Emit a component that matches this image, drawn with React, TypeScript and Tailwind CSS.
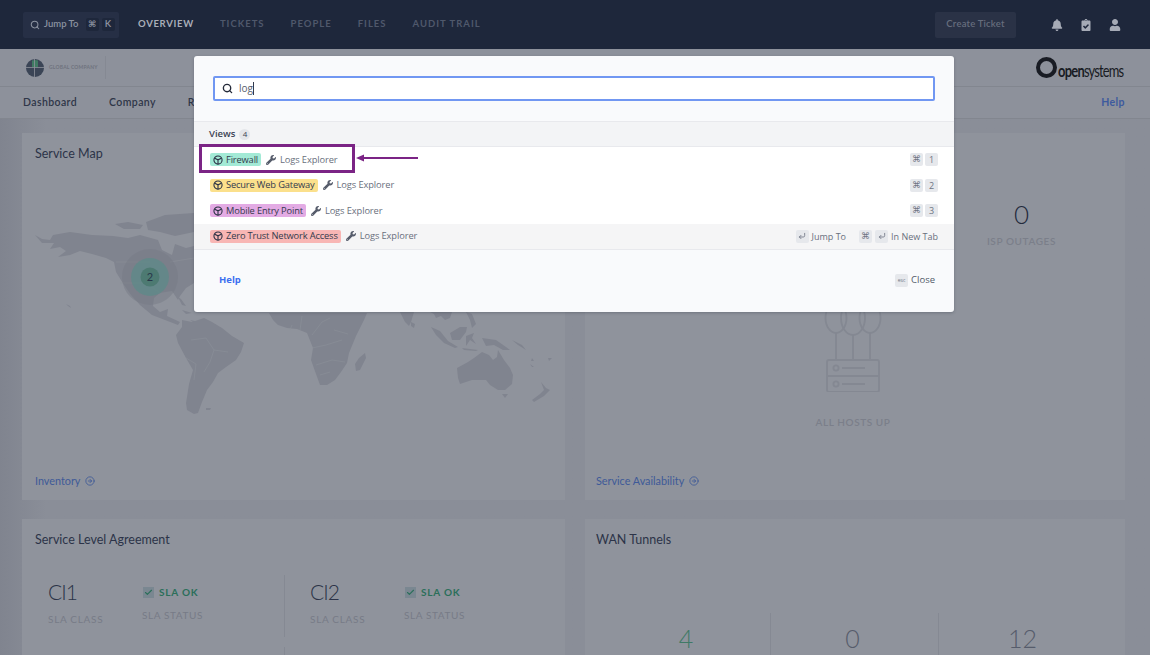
import { Check, CircleArrowRight, CornerDownLeft, Search } from 'lucide-react';
import { FaBell, FaClipboardCheck, FaUser, FaWrench } from 'react-icons/fa';
import type { ReactNode } from 'react';

const views = [
  { name: 'Firewall', tag: 'bg-[#a3ead6]', key: '1' },
  { name: 'Secure Web Gateway', tag: 'bg-[#fbe08c]', key: '2' },
  { name: 'Mobile Entry Point', tag: 'bg-[#e3abe4]', key: '3' },
  { name: 'Zero Trust Network Access', tag: 'bg-[#f8b6b4]', key: '' },
];

function CubeIcon() {
  return (
    <svg viewBox="0 0 12 12" className="size-[10px] shrink-0" fill="none" stroke="#2b3245" strokeWidth="1.3">
      <circle cx="6" cy="6" r="4.9" />
      <path d="M2 3.8 6 5.8l4-2M6 5.8V11" />
    </svg>
  );
}

function Kbd({ children, className = '' }: { children: ReactNode; className?: string }) {
  return (
    <span className={`flex h-[13px] w-[13px] items-center justify-center rounded-[2px] bg-[#e6e8ec] text-[9px] text-[#6f7583] ${className}`}>
      {children}
    </span>
  );
}

function Cmd() {
  return <span className="font-['DejaVu_Sans',sans-serif] text-[9px] leading-none">⌘</span>;
}

function WorldMap() {
  const land = '#80848f';
  return (
    <svg viewBox="22 200 543 230" className="block h-[230px] w-[543px]" fill={land}>
      {/* north america */}
      <path d="M35 235 42 239 50 240 53 235 70 232 92 235 113 236 128 238 140 235 158 240 162 250 172 255 175 244 186 248 194 246 194 283 186 288 180 296 178 300 172 291 160 293 154 298 153 306 160 312 168 309 167 316 180 322 178 325 165 320 152 315 140 305 131 295 124 285 116 272 114 262 106 258 92 254 80 251 70 255 58 257 66 251 60 247 50 249 54 243 42 243Z" />
      <path d="M115 224 128 222 143 225 140 229 124 229ZM146 222 165 215 194 213 194 232 175 236 160 232 148 230ZM178 297 182 305 186 306 181 299ZM66 304 70 306 71 308 68 306ZM190 320 200 322 196 324ZM182 310 192 313 186 314Z" />
      {/* south america */}
      <path d="M182 320 192 322 204 318 212 322 222 328 232 336 244 343 241 352 236 360 226 367 218 373 213 382 207 390 202 402 198 413 194 414 187 410 186 403 187 397 189 384 193 370 186 358 178 343 176 335 182 327Z" />
      <path d="M206 408 211 408 210 410 206 410Z" />
      {/* africa, asia and the islands below the dialog */}
      <path d="M269 313 367 313 364 320 356 336 349 353 347 363 341 372 335 380 327 385 320 385 316 374 311 360 313 348 307 333 297 329 287 328 278 325 273 320Z" />
      <path d="M365 353 366 358 360 370 356 371 355 364 359 358Z" />
      <path d="M400 312 414 312 411 322 409 326 405 322ZM411 322 415 324 414 328 411 326ZM430 312 452 312 450 318 445 320 441 316 436 318 434 314ZM466 312 472 314 476 324 472 328 470 320Z" />
      <path d="M431 327 440 331 448 341 458 347 455 348 444 343 436 335ZM450 333 460 327 467 327 466 332 460 340 452 340ZM466 336 474 333 472 338 476 344 470 340 466 346ZM462 348 478 350 476 351 464 350ZM482 338 496 340 506 347 510 350 503 350 494 345 486 346ZM512 340 522 345 526 350 518 345ZM532 358 534 361 531 361ZM548 358 552 358 549 361ZM530 364 534 367 532 367Z" />
      {/* australia and new zealand */}
      <path d="M457 368 468 362 474 358 482 352 489 355 493 360 497 357 498 350 504 360 510 368 513 375 512 384 505 390 498 390 490 385 486 380 480 380 472 380 460 384 458 378Z" />
      <path d="M502 394 508 394 505 398ZM541 382 546 388 550 390 544 396 534 402 532 400 540 394 544 390Z" />
      <g fill="none" stroke="#8c9099" strokeWidth="0.6">
        <path d="M120 283 146 283 160 293M116 262 150 262M194 258 170 262" />
        <path d="M191 340 206 338 214 350 210 362 204 372M186 358 196 364 194 380M214 350 228 352" />
        <path d="M290 330 292 325M300 330 302 316M312 335 322 322 330 318M312 348 326 345 342 340M316 365 332 360 345 362M320 375 330 372M334 330 348 334" />
      </g>
      {/* pin */}
      <circle cx="150" cy="277" r="28" fill="#757a85" fillOpacity="0.45" />
      <circle cx="150" cy="277" r="19" fill="#5f8a88" fillOpacity="0.8" />
      <circle cx="150" cy="277" r="9.5" fill="#4d7a72" />
      <text x="150" y="281" textAnchor="middle" fontSize="11" fill="#28384a" fontFamily="Lato, sans-serif">2</text>
    </svg>
  );
}

function HostsUp() {
  return (
    <svg viewBox="0 0 60 90" className="mx-auto block h-[90px] w-[60px]" fill="none" stroke="#848892" strokeWidth="1.8">
      <ellipse cx="13" cy="16" rx="10.5" ry="15" />
      <ellipse cx="47" cy="16" rx="10.5" ry="15" />
      <ellipse cx="30" cy="16" rx="12" ry="17" />
      <path d="M13 31V58M30 33V58M47 31V58" />
      <rect x="4" y="58" width="52" height="32" rx="2" />
      <path d="M4 74H56M19 66H42M19 82H42" />
      <circle cx="13" cy="66" r="2.6" />
      <circle cx="13" cy="82" r="2.6" />
    </svg>
  );
}

function SlaBlock({ name }: { name: string }) {
  return (
    <div className="flex">
      <div className="w-[94px]">
        <div className="text-[21px] leading-[28px] font-light tracking-[-1px] text-[#2c3348]">{name}</div>
        <div className="mt-[6px] text-[10px] tracking-[0.7px] text-[#777b87]">SLA CLASS</div>
      </div>
      <div>
        <div className="mt-[7px] flex items-center text-[10px] leading-[14px] font-bold tracking-[0.8px] text-[#2b6f5a]">
          <span className="mr-[5px] ml-[1px] flex size-[11px] items-center justify-center bg-[#7a8791]">
            <Check className="size-[9px] text-[#2b6f5a]" strokeWidth={3} />
          </span>
          SLA OK
        </div>
        <div className="mt-[9px] text-[10px] tracking-[0.6px] text-[#777b87]">SLA STATUS</div>
      </div>
    </div>
  );
}

function Dialog() {
  return (
    <div className="absolute top-[56px] left-[194px] h-[256px] w-[760px] overflow-hidden rounded-[3px] bg-[#f9fafc] font-['Open_Sans',sans-serif] shadow-[0_1px_3px_rgba(40,45,60,0.3)]">
      <div className="h-[65px] px-[19px] pt-[20px]">
        <div className="flex h-[25px] w-[722px] items-center rounded-[2px] border-2 border-[#7197f2] bg-white pl-[7px] text-[10px] text-[#575e6e]">
          <Search className="mr-[6px] size-[11px] text-[#252b3a]" strokeWidth={3} />
          <span className="border-r border-[#333a4c] leading-[13px]">log</span>
        </div>
      </div>
      <div className="flex h-[26px] items-center border-y border-[#e8e9ed] bg-[#f3f4f6] pl-[15px] text-[9.5px] font-semibold text-[#3c4354]">
        Views
        <span className="ml-[4px] flex size-[11px] items-center justify-center rounded-full bg-[#e4e5e9] text-[8px] font-normal">4</span>
      </div>
      <div className="bg-white">
        {views.map((v) => (
          <div key={v.name} className={`flex h-[25.5px] items-center pr-[16px] pl-[16px] ${v.key ? '' : 'bg-[#f5f5f6]'}`}>
            <span className={`flex h-[13px] items-center gap-[3px] rounded-[2px] px-[3px] text-[9.3px] tracking-[-0.15px] text-[#333a4c] ${v.tag}`}>
              <CubeIcon />
              {v.name}
            </span>
            <FaWrench className="mr-[4px] ml-[5px] size-[10px] text-[#565c6b]" />
            <span className="text-[9.3px] tracking-[-0.1px] text-[#696f7d]">Logs Explorer</span>
            {v.key ? (
              <span className="ml-auto flex gap-[2px]">
                <Kbd><Cmd /></Kbd>
                <Kbd>{v.key}</Kbd>
              </span>
            ) : (
              <span className="ml-auto flex items-center text-[9px] text-[#696f7d]">
                <Kbd><CornerDownLeft className="size-[8px]" strokeWidth={2.5} /></Kbd>
                <span className="ml-[3px]">Jump To</span>
                <Kbd className="ml-[13px]"><Cmd /></Kbd>
                <Kbd className="ml-[3px]"><CornerDownLeft className="size-[8px]" strokeWidth={2.5} /></Kbd>
                <span className="ml-[3px]">In New Tab</span>
              </span>
            )}
          </div>
        ))}
      </div>
      <div className="flex h-[62px] items-center justify-between border-t border-[#e8e9ed] pr-[19px] pl-[25px]">
        <span className="text-[9.5px] font-bold text-[#3c6ff0]">Help</span>
        <span className="flex items-center text-[9.5px] text-[#535a69]">
          <Kbd className="mr-[3px] !text-[5px]">esc</Kbd>
          Close
        </span>
      </div>
      {/* callout drawn on the screenshot */}
      <div className="absolute top-[88px] left-[5px] h-[29px] w-[156px] border-[3px] border-[#7b2485]" />
      <svg viewBox="0 0 64 10" className="absolute top-[97px] left-[162px] h-[10px] w-[64px]">
        <path d="M0 5 8 1.5V4H62V6H8V8.5Z" fill="#7b2485" />
      </svg>
    </div>
  );
}

export default function App() {
  return (
    <div className="relative h-[655px] w-[1150px] overflow-hidden bg-[#8a8e98] font-['Lato',sans-serif]">
      <header className="flex h-[49px] items-center bg-[#1e273b] pr-[29px] pl-[23px]">
        <div className="flex h-[26px] w-[96px] items-center rounded-[2px] bg-[#262f45] pl-[7px] text-[9.5px] font-semibold text-[#8c93a1]">
          <Search className="mr-[4px] size-[10px]" strokeWidth={2.5} />
          Jump To
          <span className="ml-[7px] flex size-[13px] items-center justify-center rounded-[2px] bg-[#1e273b]"><Cmd /></span>
          <span className="ml-[3px] flex size-[13px] items-center justify-center rounded-[2px] bg-[#1e273b]">K</span>
        </div>
        <nav className="ml-[19px] flex gap-[26px] text-[9.5px] font-bold tracking-[1px] text-[#4f586b]">
          <span className="tracking-[0.7px] text-[#a9aeb9]">OVERVIEW</span>
          <span>TICKETS</span>
          <span>PEOPLE</span>
          <span>FILES</span>
          <span>AUDIT TRAIL</span>
        </nav>
        <div className="ml-auto flex h-[26px] w-[81px] items-center justify-center rounded-[2px] bg-[#2a3246] text-[9.5px] font-semibold tracking-[0.2px] text-[#666d7d]">
          Create Ticket
        </div>
        <div className="ml-[35px] flex items-center gap-[17px] text-[#a6abb6]">
          <FaBell className="size-[12px]" />
          <FaClipboardCheck className="size-[12px]" />
          <FaUser className="size-[12px]" />
        </div>
      </header>

      <div className="flex h-[38px] items-center border-b border-[#82868f] bg-[#8d919b] pr-[29px] pl-[26px]">
        <svg viewBox="0 0 18 18" className="size-[18px]">
          <circle cx="9" cy="9" r="9" fill="#3b4556" />
          <path d="M6 1.5a9 9 0 0 1 6 0V8H6Z" fill="#3f7a62" />
          <path d="M0 8.5H18M8.5 0V18" stroke="#8d919b" strokeWidth="0.8" />
        </svg>
        <span className="ml-[5px] text-[5px] font-bold tracking-[0.2px] text-[#6f737e]">GLOBAL COMPANY</span>
        <span className="ml-[7px] h-[23px] w-px bg-[#858993]" />
        <span className="ml-auto flex items-center text-[#191c24]">
          <span className="size-[21px] rounded-full border-[4px] border-[#191c24]" />
          <span className="mt-[6px] ml-[1px] flex w-[63px] origin-left scale-x-[0.76] text-[17px] leading-none whitespace-nowrap">
            <span className="font-bold tracking-[-1px]">open</span>
            <span className="tracking-[-1.1px]">systems</span>
          </span>
        </span>
      </div>

      <div className="flex h-[32px] items-center border-b border-[#82868f] bg-[#8d919b] pr-[25px] pl-[23px] text-[10.5px] font-semibold tracking-[0.4px] text-[#2f3648]">
        <span>Dashboard</span>
        <span className="ml-[32px]">Company</span>
        <span className="ml-[32px]">Reports</span>
        <span className="ml-auto font-bold text-[#3d5a9e]">Help</span>
      </div>

      <main className="bg-gradient-to-r from-[#80848f] via-[#8a8e98] via-[4%] to-[#8a8e98] pt-[14px] pl-[22px]">
        <div className="flex gap-[20px]">
          <section className="flex h-[367px] w-[543px] flex-col bg-[#8f939c]">
            <h2 className="pt-[13px] pl-[13px] text-[12.5px] leading-[16px] text-[#2c3348]">Service Map</h2>
            <div className="mt-[38px]"><WorldMap /></div>
            <div className="mt-auto flex items-center gap-[5px] pb-[11px] pl-[13px] text-[10.8px] text-[#3e5a98]">
              Inventory <CircleArrowRight className="size-[10px]" />
            </div>
          </section>
          <section className="flex h-[367px] w-[540px] flex-col bg-[#8f939c]">
            <div className="mt-[69px] mr-[69px] self-end text-center">
              <div className="text-[26px] leading-[24px] font-light text-[#232a3c]">0</div>
              <div className="mt-[9px] text-[10px] leading-[12px] font-semibold tracking-[0.6px] text-[#7b7f8a]">ISP OUTAGES</div>
            </div>
            <div className="mt-[55px] w-[536px] text-center">
              <HostsUp />
              <div className="mt-[24px] text-[10px] leading-[12px] font-semibold tracking-[0.6px] text-[#7b7f8a]">ALL HOSTS UP</div>
            </div>
            <div className="mt-auto flex items-center gap-[5px] pb-[11px] pl-[11px] text-[10.8px] text-[#3e5a98]">
              Service Availability <CircleArrowRight className="size-[10px]" />
            </div>
          </section>
        </div>

        <div className="mt-[19px] flex gap-[20px]">
          <section className="h-[136px] w-[543px] bg-[#8f939c]">
            <h2 className="pt-[13px] pl-[13px] text-[12.5px] leading-[16px] text-[#2c3348]">Service Level Agreement</h2>
            <div className="mt-[30px] flex pl-[26px]">
              <div className="w-[236px]"><SlaBlock name="CI1" /></div>
              <div className="-mt-[3px] flex flex-col gap-[10px]">
                <div className="h-[62px] w-px bg-[#858993]" />
                <div className="h-[20px] w-px bg-[#858993]" />
              </div>
              <div className="ml-[25px]"><SlaBlock name="CI2" /></div>
            </div>
          </section>
          <section className="h-[136px] w-[540px] bg-[#8f939c]">
            <h2 className="pt-[13px] pl-[11px] text-[12.5px] leading-[16px] text-[#2c3348]">WAN Tunnels</h2>
            <div className="mt-[65px] flex text-center text-[25px] leading-[50px] font-light text-[#565c6b]">
              <div className="h-[50px] w-[185px] pl-[17px] text-[#3f7a66]">4</div>
              <div className="h-[50px] w-[168px] border-l border-[#858993] pr-[4px]">0</div>
              <div className="h-[50px] w-[168px] border-l border-[#858993]">12</div>
            </div>
          </section>
        </div>
      </main>

      <Dialog />
    </div>
  );
}
